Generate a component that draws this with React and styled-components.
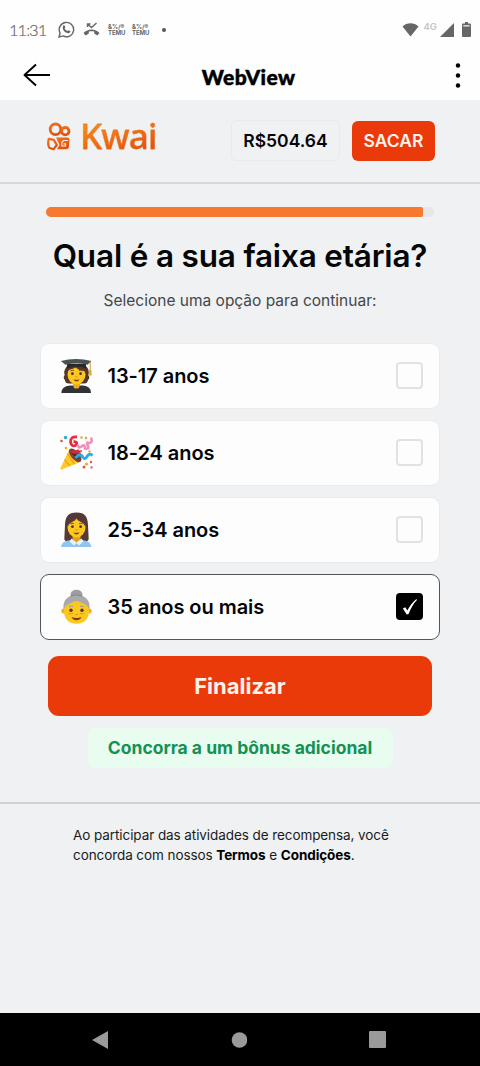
import React, { useState } from 'react'
import styled, { createGlobalStyle } from 'styled-components'

const GlobalStyle = createGlobalStyle`
	* {
		box-sizing: border-box;
	}
	body {
		margin: 0;
		background: #eff1f2;
		font-family: Inter, 'Liberation Sans', sans-serif;
		color: #050607;
	}
	button {
		font-family: inherit;
		border: none;
		padding: 0;
	}
	svg {
		display: block;
		flex: none;
	}
`
const Screen = styled.div`
	display: flex;
	flex-direction: column;
	width: 480px;
	height: 1066px;
	overflow: hidden;
	background: #eff1f2;
`
const StatusBar = styled.div`
	display: flex;
	align-items: center;
	height: 50px;
	padding: 9px 9px 0 10px;
	background: #fefefe;
	color: #666;
`
const Clock = styled.span`
	width: 49px;
	font-family: Lato, sans-serif;
	font-size: 16.5px;
	font-weight: 300;
	letter-spacing: -1px;
	-webkit-text-stroke: 0.2px #666;
	margin-left: -1px;
`
const StatusIcons = styled.div`
	display: flex;
	align-items: center;
	gap: 8px;
	flex: 1;
`
const TemuMark = styled.span`
	width: 16px;
	font-size: 6px;
	line-height: 6px;
	font-weight: 700;
	letter-spacing: -0.1px;
	text-align: center;
	white-space: nowrap;
`
const Dot = styled.span`
	width: 4px;
	height: 4px;
	margin-left: 6px;
	border-radius: 50%;
	background: #555;
`
const Network = styled.span`
	margin: -6px 3px 0 5px;
	font-size: 9.5px;
	font-weight: 600;
	color: #c4c4c4;
`
const TitleBar = styled.div`
	display: flex;
	align-items: center;
	justify-content: space-between;
	height: 50px;
	padding: 0 19px 0 23px;
	background: #fefefe;
`
const PageName = styled.h1`
	margin: 2px 9px 0 0;
	font-family: Lato, sans-serif;
	font-size: 21px;
	font-weight: 900;
	letter-spacing: 0.4px;
	color: #000;
	-webkit-text-stroke: 0.5px #000;
`
const Header = styled.header`
	display: flex;
	align-items: center;
	height: 84px;
	padding: 0 45px 1px 46px;
	border-bottom: 2px solid #d5d7da;
`
const Logo = styled.div`
	display: flex;
	align-items: center;
	gap: 9px;
	flex: 1;
	margin-top: -9px;
`
const LogoName = styled.span`
	font-family: 'Noto Sans', sans-serif;
	font-size: 35px;
	line-height: 42px;
	font-weight: 500;
	letter-spacing: -0.8px;
	color: transparent;
	background: linear-gradient(165deg, #f58a1c 20%, #e5540e 80%);
	background-clip: text;
	-webkit-text-stroke: 0.3px #ea6514;
`
const Balance = styled.div`
	width: 109px;
	height: 41px;
	margin-right: 12px;
	border: 1px solid #e8eaec;
	border-radius: 5px;
	line-height: 39px;
	text-align: center;
	font-size: 17.5px;
	font-weight: 600;
`
const Withdraw = styled.button`
	width: 83px;
	height: 40px;
	border-radius: 6px;
	background: #eb3a09;
	color: #fff3ea;
	font-size: 17.5px;
	font-weight: 600;
`
const Progress = styled.div`
	height: 10px;
	margin: 23px 46px 0;
	border-radius: 6px;
	background: #e6e7ea;
	overflow: hidden;
`
const ProgressFill = styled.div`
	height: 100%;
	border-radius: 0 2px 2px 0;
	background: #f7782f;
`
const Question = styled.h2`
	margin: 19px 0 0;
	line-height: 40px;
	text-align: center;
	white-space: nowrap;
	font-size: 31.5px;
	font-weight: 600;
	letter-spacing: -0.18px;
`
const Hint = styled.p`
	margin: 15px 0 0;
	line-height: 20px;
	text-align: center;
	font-size: 15.5px;
	color: #45474a;
`
const Options = styled.div`
	display: flex;
	flex-direction: column;
	gap: 11px;
	margin: 32px 40px 0;
`
const Option = styled.div`
	display: flex;
	align-items: center;
	height: 66px;
	padding: 0 16px 1px 19px;
	border: ${({ $checked }) =>
		$checked ? '1.5px solid #55565a' : '1px solid #e9ebed'};
	border-radius: 9px;
	background: #fdfdfe;
`
const OptionLabel = styled.span`
	flex: 1;
	margin-left: 13.5px;
	font-size: 20px;
	font-weight: 600;
	letter-spacing: -0.05px;
`
const Checkbox = styled.span`
	display: flex;
	align-items: center;
	justify-content: center;
	width: 27px;
	height: 27px;
	border: 2px solid ${({ $checked }) => ($checked ? '#000' : '#e1e2e5')};
	border-radius: 4px;
	background: ${({ $checked }) => ($checked ? '#000' : '#fdfdfe')};
`
const Submit = styled.button`
	height: 60px;
	margin: 16px 48px 0;
	border-radius: 11px;
	background: #eb3a09;
	color: #fff3ea;
	font-size: 22px;
	font-weight: 700;
`
const Bonus = styled.div`
	align-self: center;
	width: 305px;
	height: 40px;
	margin: 12px 0 34px;
	border-radius: 8px;
	background: #e8fcef;
	line-height: 40px;
	text-align: center;
	white-space: nowrap;
	font-size: 17.5px;
	font-weight: 700;
	color: #159154;
`
const Terms = styled.footer`
	flex: 1;
	padding: 21px 73px 0;
	border-top: 2px solid #cfd1d3;
	font-size: 13.5px;
	line-height: 20px;
	letter-spacing: -0.08px;
	white-space: nowrap;
	color: #1a1b1d;
	b {
		font-weight: 700;
		color: #000;
	}
`
const NavBar = styled.nav`
	display: flex;
	align-items: center;
	justify-content: space-between;
	height: 53px;
	padding: 0 94px 0 92px;
	background: #000;
`

const WhatsappIcon = () => (
	<svg width='17' height='17' viewBox='0 0 17 17'>
		<path
			d='M1 16l1.100-4A7.200 7.200 0 1 1 5 14.900z'
			fill='none'
			stroke='#666'
			strokeWidth='1.400'
		/>
		<path
			d='M5.200 4.700c1-1 1.500-.4 2.200 1.500l-.8 1c.6 1.300 1.600 2.200 3 2.900l1-.9c1.700.8 2.100 1 1.700 1.900-.8 1.500-2.700 1.300-4.400.3-2.300-1.300-4-3.800-2.700-6.700z'
			fill='#666'
		/>
	</svg>
)
const MissedCallIcon = () => (
	<svg width='17' height='17' viewBox='0 0 17 17'>
		<path
			d='M4.500 6V3H7.500M5 3.500l3.500 3 5-4.500'
			fill='none'
			stroke='#666'
			strokeWidth='1.400'
		/>
		<path
			d='M.5 12C4.500 7.200 12.500 7.200 16.500 12L14.300 14.400 11.200 12.500V10.600C9.500 10.100 7.500 10.100 5.800 10.600V12.500L2.700 14.400z'
			fill='#666'
		/>
	</svg>
)
const WifiIcon = () => (
	<svg width='17' height='14' viewBox='0 0 17 14'>
		<path d='M.5 3.500C5-.7 12-.7 16.500 3.500L8.500 13.500z' fill='#666' />
	</svg>
)
const CellIcon = () => (
	<svg width='14' height='14' viewBox='0 0 14 14'>
		<path d='M0 14L14 0V14z' fill='#666' />
	</svg>
)
const BatteryIcon = styled.svg.attrs({ width: 9, height: 15, viewBox: '0 0 9 15' })`
	margin-left: 8px;
`
const BackIcon = () => (
	<svg width='28' height='25' viewBox='0 0 28 25'>
		<path
			d='M13 1.500L1.500 12 13 22.500M1.500 12H27'
			fill='none'
			stroke='#000'
			strokeWidth='1.900'
			strokeLinejoin='round'
		/>
	</svg>
)
const MoreIcon = () => (
	<svg width='6' height='26' viewBox='0 0 6 26'>
		<circle cx='3' cy='3.500' r='2.200' />
		<circle cx='3' cy='13.500' r='2.200' />
		<circle cx='3' cy='23.500' r='2.200' />
	</svg>
)
const KwaiIcon = () => (
	<svg width='25' height='29' viewBox='0 0 25 29'>
		<defs>
			<linearGradient id='kwai' x1='0' y1='0' x2='.4' y2='1'>
				<stop offset='0' stopColor='#ee711d' />
				<stop offset='1' stopColor='#e3520f' />
			</linearGradient>
		</defs>
		<g fill='none' stroke='url(#kwai)' strokeWidth='2.800'>
			<circle cx='9.500' cy='7.300' r='5.300' />
			<circle cx='19.300' cy='9.200' r='3.700' />
			<path
				d='M2.800 16.800L7.800 17.800 10.800 23 7.500 27.300 3.300 25.800Q1.300 22 2.800 16.800z'
				strokeLinejoin='round'
				strokeWidth='2.200'
			/>
		</g>
		<path
			d='M10 15.500H21.500Q23.500 15.500 23.500 18L23 24.500Q22.800 27.300 20 27.300H11L13.500 23z'
			fill='url(#kwai)'
		/>
		<path
			d='M22 18.500H17.500L15.800 20.500V24H19.500V21.800H17.500'
			fill='none'
			stroke='#f6ede7'
			strokeWidth='1.200'
		/>
	</svg>
)
const CheckIcon = () => (
	<svg width='16' height='18' viewBox='0 0 15 16'>
		<path
			d='M.8 9.500L3.100 8.300 5 11.300Q8.500 4.500 13.300.7L14.200 1.200Q9.500 6 6.200 14.500L4.400 15z'
			fill='#fff'
		/>
	</svg>
)

const Face = ({ cy = 16 }) => (
	<g transform={`translate(0 ${cy - 16})`}>
		<ellipse cx='16.500' cy='16.500' rx='9' ry='10' fill='#fcc820' />
		<path
			d='M10.500 12.900q1.700-1.300 3.400-.2M19.100 12.700q1.700-1.100 3.400.2'
			fill='none'
			stroke='#6d4428'
			strokeWidth='.9'
		/>
		<circle cx='12.400' cy='15.700' r='1.350' fill='#493127' />
		<circle cx='20.600' cy='15.700' r='1.350' fill='#493127' />
		<path d='M15.400 18.600q1.100 1 2.200 0' fill='none' stroke='#d98b17' />
		<path d='M13.500 21.200q3 1 6 0-1 2.300-3 2.300t-3-2.300z' fill='#7e3527' />
	</g>
)
const StudentEmoji = () => (
	<svg width='34' height='36' viewBox='0 0 34 36'>
		<path
			d='M7 8Q3 13 4.700 17 2.500 20 5 22 5 25.500 9 25.500H24Q27.500 25.500 28 22 30.500 20 28.300 17 30 12 26 8z'
			fill='#543728'
		/>
		<path d='M1.300 35Q1.500 28 10 27.500H23Q31 28 31 35z' fill='#303336' />
		<path d='M12.500 25h8l-1.500 5q-2.500 1-5 0z' fill='#f1a71c' />
		<Face cy={16} />
		<path d='M7 15Q8 12 10 11.500 13 11 15.500 9.500 19 12.500 22.500 12.500 25 13 26 15.500V8H7z' fill='#543728' />
		<path d='M7 6H26V10.500Q16.500 6.500 7 10.500z' fill='#26282a' />
		<path d='M.8 3Q16-.8 31.500 3L27.500 6.800Q16.500 4 5.500 6.800z' fill='#4b5053' />
		<path d='M30.200 3.500V13' stroke='#c8962c' />
		<path d='M29 12h2.400l.3 5.500h-3z' fill='#e0ac35' />
	</svg>
)
const PartyEmoji = () => (
	<svg width='34' height='36' viewBox='0 0 34 36'>
		<path d='M9.500 14L.3 33.500Q.3 35 2 34.500L21 26.500z' fill='#ffc928' />
		<path
			d='M7.500 18.500L14.500 29.300M4.500 24.500L10 31.200M10 15L18 27.500'
			stroke='#e9a51b'
			strokeWidth='1.200'
		/>
		<ellipse
			cx='15.200'
			cy='20.300'
			rx='4.200'
			ry='8.300'
			transform='rotate(-41 15.200 20.300)'
			fill='#80413a'
		/>
		<path d='M12 17Q15 19 17.500 24' stroke='#4f2825' strokeWidth='2.500' fill='none' />
		<path
			d='M17 2Q10.500 1 10.500 7 11.500 12 15.500 10.500 19 7 13.500 6.500'
			fill='none'
			stroke='#e52f3e'
			strokeWidth='2.800'
		/>
		<path d='M12 16Q14 19 16.500 16.500T20 20' fill='none' stroke='#d82b43' strokeWidth='2.300' />
		<path
			d='M18 9.500Q18 14 21.500 11.500 25 8.500 25 13.500 30 14.500 27.500 10 25.500 6.500 29.500 8 33 7.500 31 2.500'
			fill='none'
			stroke='#f08fbd'
			strokeWidth='2.600'
		/>
		<path
			d='M15.500 23Q20 17.500 22.500 21.500 24.500 26 27 21.500 29.500 17.500 32.500 20.500'
			fill='none'
			stroke='#27ade4'
			strokeWidth='2.800'
		/>
		<g fill='#f6a81e'>
			<circle cx='21.500' cy='2.500' r='1.300' />
			<circle cx='6' cy='13' r='1.300' />
			<circle cx='29.500' cy='16.500' r='1.200' />
			<circle cx='26.500' cy='29' r='1.600' />
		</g>
		<g fill='#e5504a'>
			<circle cx='1.500' cy='6' r='1.300' />
			<circle cx='21' cy='16' r='1.100' />
			<circle cx='24' cy='32' r='1.500' />
			<circle cx='31' cy='27' r='1.200' />
		</g>
		<circle cx='5.500' cy='2.500' r='1.700' fill='#29a9dc' />
		<circle cx='26' cy='3' r='1.200' fill='#d9a52b' />
		<circle cx='31.500' cy='32.500' r='1.400' fill='#ef7fb0' />
	</svg>
)
const WorkerEmoji = () => (
	<svg width='34' height='36' viewBox='0 0 34 36'>
		<path
			d='M16.500.5C8 .5 5.200 5 5 13L4.300 27Q4.500 29.500 9 29.500H24Q28.500 29.500 28.700 27L28 13C27.800 5 25 .5 16.500.5z'
			fill='#543937'
		/>
		<path d='M1 35Q1.500 28.500 11 28H22Q30.500 28.500 31.500 35z' fill='#91c4ee' />
		<path d='M12.500 23.500h8v5l-4 2.500-4-2.500z' fill='#e59f20' />
		<path
			d='M11.500 26.500L16.500 30.500 21.500 26.500 23.500 29.500 19 33.500 16.500 31 14 33.500 9.500 29.500z'
			fill='#e4f2fc'
		/>
		<Face cy={15} />
		<path
			d='M7.500 15Q8.500 11.500 12 10 15.500 8.500 16.500 6.500 17.500 8.500 21 10 24.500 11.500 25.500 15 26.500 4 16.500 3.500 6.500 4 7.500 15z'
			fill='#543937'
		/>
	</svg>
)
const GrandmaEmoji = () => (
	<svg width='34' height='36' viewBox='0 0 34 36'>
		<ellipse cx='16.500' cy='5.500' rx='6' ry='4.700' fill='#9d9e9f' />
		<path d='M3.500 20C2.500 11 8 6 16.500 6S30.500 11 29.500 20z' fill='#a9aaab' />
		<path d='M10.500 7.200Q16.500 4.500 22.500 7.200' fill='none' stroke='#858687' />
		<circle cx='3.800' cy='22' r='2.500' fill='#f1ae20' />
		<circle cx='29.200' cy='22' r='2.500' fill='#f1ae20' />
		<path
			d='M4 22C4 17 7 16 10 14.500 13 13 15 12 16.500 12S20 13 23 14.500C26 16 29 17 29 22 29 30 24.500 34.700 16.500 34.700S4 30 4 22z'
			fill='#fcc820'
		/>
		<path
			d='M9 18q2-1.600 4-.4M20 17.600q2-1.200 4 .4'
			fill='none'
			stroke='#a7a39a'
			strokeWidth='1.300'
		/>
		<circle cx='11' cy='21.300' r='1.700' fill='#503529' />
		<circle cx='22' cy='21.300' r='1.700' fill='#503529' />
		<path
			d='M8.500 24.300q2.500 1.200 4.500 0M20 24.300q2.500 1.200 4.500 0M15 25.200q1.500 1.200 3 0'
			fill='none'
			stroke='#dc941a'
			strokeWidth='.9'
		/>
		<path d='M11.500 28q5 1.800 10 0-1.500 3.200-5 3.200t-5-3.200z' fill='#7c3c23' />
	</svg>
)

const options = [
	{ label: '13-17 anos', Emoji: StudentEmoji },
	{ label: '18-24 anos', Emoji: PartyEmoji },
	{ label: '25-34 anos', Emoji: WorkerEmoji },
	{ label: '35 anos ou mais', Emoji: GrandmaEmoji },
]

const App = () => {
	const [selected, setSelected] = useState(3)

	return (
		<Screen>
			<GlobalStyle />
			<StatusBar>
				<Clock>11:31</Clock>
				<StatusIcons>
					<WhatsappIcon />
					<MissedCallIcon />
					<TemuMark>
						&amp;%/®
						<br />
						TEMU
					</TemuMark>
					<TemuMark>
						&amp;%/®
						<br />
						TEMU
					</TemuMark>
					<Dot />
				</StatusIcons>
				<WifiIcon />
				<Network>4G</Network>
				<CellIcon />
				<BatteryIcon>
					<path
						d='M3 0h3v1.500h2q1 0 1 1V14q0 1-1 1H1q-1 0-1-1V2.500q0-1 1-1h2z'
						fill='#666'
					/>
					<path d='M1.300 3.200h6.400v1.300H1.300z' fill='#eee' />
				</BatteryIcon>
			</StatusBar>
			<TitleBar>
				<BackIcon />
				<PageName>WebView</PageName>
				<MoreIcon />
			</TitleBar>
			<Header>
				<Logo>
					<KwaiIcon />
					<LogoName>Kwai</LogoName>
				</Logo>
				<Balance>R$504.64</Balance>
				<Withdraw>SACAR</Withdraw>
			</Header>
			<Progress>
				<ProgressFill style={{ width: '97.2%' }} />
			</Progress>
			<Question>Qual é a sua faixa etária?</Question>
			<Hint>Selecione uma opção para continuar:</Hint>
			<Options>
				{options.map(({ label, Emoji }, i) => (
					<Option
						key={label}
						$checked={selected === i}
						onClick={() => setSelected(i)}
					>
						<Emoji />
						<OptionLabel>{label}</OptionLabel>
						<Checkbox $checked={selected === i}>
							{selected === i && <CheckIcon />}
						</Checkbox>
					</Option>
				))}
			</Options>
			<Submit>Finalizar</Submit>
			<Bonus>Concorra a um bônus adicional</Bonus>
			<Terms>
				Ao participar das atividades de recompensa, você
				<br />
				concorda com nossos <b>Termos</b> e <b>Condições</b>.
			</Terms>
			<NavBar>
				<svg width='16' height='18' viewBox='0 0 16 18'>
					<path d='M0 9L16 0V18z' fill='#9a9a9b' />
				</svg>
				<svg width='16' height='16' viewBox='0 0 16 16'>
					<circle cx='8.500' cy='8' r='7.800' fill='#9a9a9b' />
				</svg>
				<svg width='17' height='17' viewBox='0 0 17 17'>
					<rect width='17' height='17' rx='1' fill='#9a9a9b' />
				</svg>
			</NavBar>
		</Screen>
	)
}
export default App
